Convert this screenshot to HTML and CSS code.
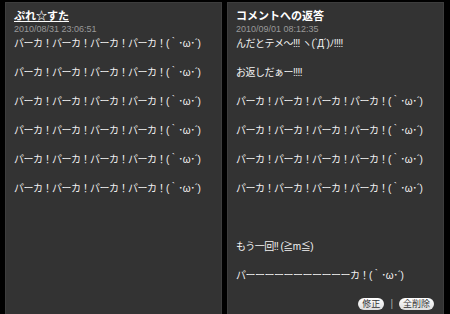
FILE: index.html
```html
<!DOCTYPE html>
<html>
<head>
    <meta charset="UTF-8">
    <title>コメント</title>
    <link rel="stylesheet" href="styles.css">
</head>
<body>
<div class="board">
    <!-- 左：コメント -->
    <div class="panel">
        <a class="title link" href="#">ぷれ☆すた</a>
        <div class="date">2010/08/31 23:06:51</div>
        <p class="text">
            パーカ！パーカ！パーカ！パーカ！(｀･ω･´)<br><br>
            パーカ！パーカ！パーカ！パーカ！(｀･ω･´)<br><br>
            パーカ！パーカ！パーカ！パーカ！(｀･ω･´)<br><br>
            パーカ！パーカ！パーカ！パーカ！(｀･ω･´)<br><br>
            パーカ！パーカ！パーカ！パーカ！(｀･ω･´)<br><br>
            パーカ！パーカ！パーカ！パーカ！(｀･ω･´)
        </p>
    </div>
    <!-- 右：返答 -->
    <div class="panel">
        <div class="title">コメントへの返答</div>
        <div class="date">2010/09/01 08:12:35</div>
        <p class="text">
            んだとテメ～!!! ヽ(`Д´)ﾉ!!!!<br><br>
            お返しだぁー!!!!<br><br>
            パーカ！パーカ！パーカ！パーカ！(｀･ω･´)<br><br>
            パーカ！パーカ！パーカ！パーカ！(｀･ω･´)<br><br>
            パーカ！パーカ！パーカ！パーカ！(｀･ω･´)<br><br>
            パーカ！パーカ！パーカ！パーカ！(｀･ω･´)<br><br><br><br>
            もう一回!! (≧m≦)<br><br>
            パーーーーーーーーーーーカ！(｀･ω･´)
        </p>
        <div class="tools">
            <span class="btn">修正</span>
            <span class="sep">|</span>
            <span class="btn">全削除</span>
        </div>
    </div>
</div>
</body>
</html>
```

FILE: styles.css
```css
html, body, div, p, a, span {
    margin: 0;
    padding: 0;
}

body {
    background: #000;
    font-family: "Liberation Sans", "Noto Sans CJK JP", sans-serif;
    color: #eee;
    overflow: hidden;
}

.board {
    display: flex;
    gap: 5px;
    padding: 2px 6px 0 5px;
}

.panel {
    width: 217px;
    height: 330px;
    background: #333;
    border: 1px solid #3d3d3d;
    padding: 6px 8px 0 8px;
    box-sizing: border-box;
    display: flex;
    flex-direction: column;
}

.title {
    display: block;
    font-size: 11px;
    line-height: 14px;
    font-weight: bold;
    color: #fff;
}

.link {
    text-decoration: underline;
}

.date {
    font-size: 9px;
    line-height: 13px;
    color: #999;
}

.text {
    font-size: 10px;
    line-height: 14.5px;
    letter-spacing: -0.5px;
    white-space: nowrap;
    color: #f2f2f2;
    padding-top: 1px;
}

.tools {
    display: flex;
    justify-content: flex-end;
    align-items: center;
    gap: 6px;
    margin-top: 14px;
    padding-right: 1px;
}

.btn {
    display: inline-block;
    height: 12px;
    line-height: 12px;
    padding: 0 4px;
    font-size: 9px;
    color: #333;
    background: linear-gradient(#fff, #ddd);
    border-radius: 7px;
}

.sep {
    font-size: 10px;
    color: #aaa;
}
```
